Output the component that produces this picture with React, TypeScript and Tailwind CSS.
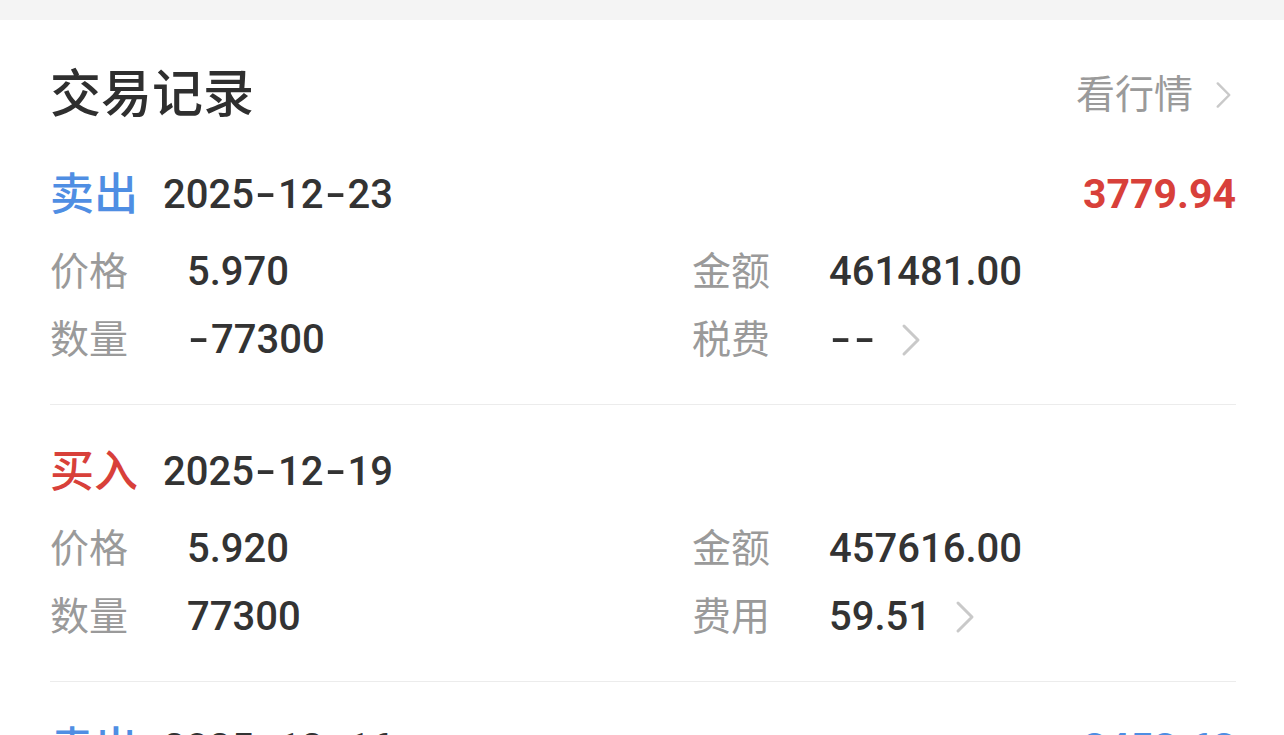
import React from 'react';

type Trade = {
  side: '卖出' | '买入';
  date: string;
  amount: string;
  price: string;
  qty: string;
  total: string;
  feeLabel: string;
  fee: string;
};

const trades: Trade[] = [
  { side: '卖出', date: '2025-12-23', amount: '3779.94', price: '5.970', qty: '-77300', total: '461481.00', feeLabel: '税费', fee: '--' },
  { side: '买入', date: '2025-12-19', amount: '', price: '5.920', qty: '77300', total: '457616.00', feeLabel: '费用', fee: '59.51' },
  { side: '卖出', date: '2025-12-16', amount: '3453.63', price: '5.940', qty: '-77300', total: '459162.00', feeLabel: '税费', fee: '--' },
];

function Num({ text }: { text: string }) {
  const parts = text.split('-');
  return (
    <span className="whitespace-nowrap">
      {parts.map((p, i) => (
        <React.Fragment key={i}>
          {i > 0 && (
            <span className="inline-block w-[24px] text-center">
              <span className="inline-block scale-x-150">-</span>
            </span>
          )}
          {p}
        </React.Fragment>
      ))}
    </span>
  );
}

function Chevron({ className }: { className?: string }) {
  return (
    <svg className={className} viewBox="0 0 20 34" fill="none" stroke="#c9c9c9" strokeWidth={3} strokeLinecap="round" strokeLinejoin="round">
      <polyline points="3,3 17,17 3,31" />
    </svg>
  );
}

function Field({ label, value, chevron }: { label: string; value: string; chevron?: boolean }) {
  return (
    <div className="flex items-center h-[68px]">
      <span className="w-[137px] shrink-0 text-[39px] text-[#9a9a9a]">{label}</span>
      <span className="text-[40px] font-medium text-[#333333] leading-none">
        <Num text={value} />
      </span>
      {chevron && <Chevron className="ml-6 w-[20px] h-[34px]" />}
    </div>
  );
}

export default function App() {
  return (
    <main
      className="min-h-screen bg-white"
      style={{ fontFamily: 'Roboto, "Noto Sans CJK SC", sans-serif' }}
    >
      <div className="h-[20px] bg-[#f4f4f4]" />

      <div className="pl-[50px] pr-[48px]">
        {/* header */}
        <div className="flex items-center justify-between h-[150px]">
          <h1 className="text-[51px] font-medium text-[#2f2f2f]">交易记录</h1>
          <div className="flex items-center gap-[22px] pr-[4px]">
            <span className="text-[39px] text-[#9a9a9a]">看行情</span>
            <Chevron className="w-[17px] h-[28px]" />
          </div>
        </div>

        {/* records */}
        <div>
          {trades.map((t, i) => (
            <div key={i} className="border-b border-[#ececec] pt-[42px] first:pt-0 pb-[30px]">
              <div className="flex items-center justify-between h-[50px]">
                <div className="flex items-center">
                  <span className={`text-[44px] font-medium ${t.side === '卖出' ? 'text-[#4f8ee3]' : 'text-[#d8403a]'}`}>
                    {t.side}
                  </span>
                  <span className="ml-[25px] text-[40px] font-medium text-[#333333]">
                    <Num text={t.date} />
                  </span>
                </div>
                {t.amount && (
                  <span className={`text-[41px] font-bold ${i === 0 ? 'text-[#d8403a]' : 'text-[#4f8ee3]'}`}>
                    {t.amount}
                  </span>
                )}
              </div>
              <div className="grid grid-cols-[642px_1fr] mt-[18px]">
                <Field label="价格" value={t.price} />
                <Field label="金额" value={t.total} />
                <Field label="数量" value={t.qty} />
                <Field label={t.feeLabel} value={t.fee} chevron />
              </div>
            </div>
          ))}
        </div>
      </div>
    </main>
  );
}
